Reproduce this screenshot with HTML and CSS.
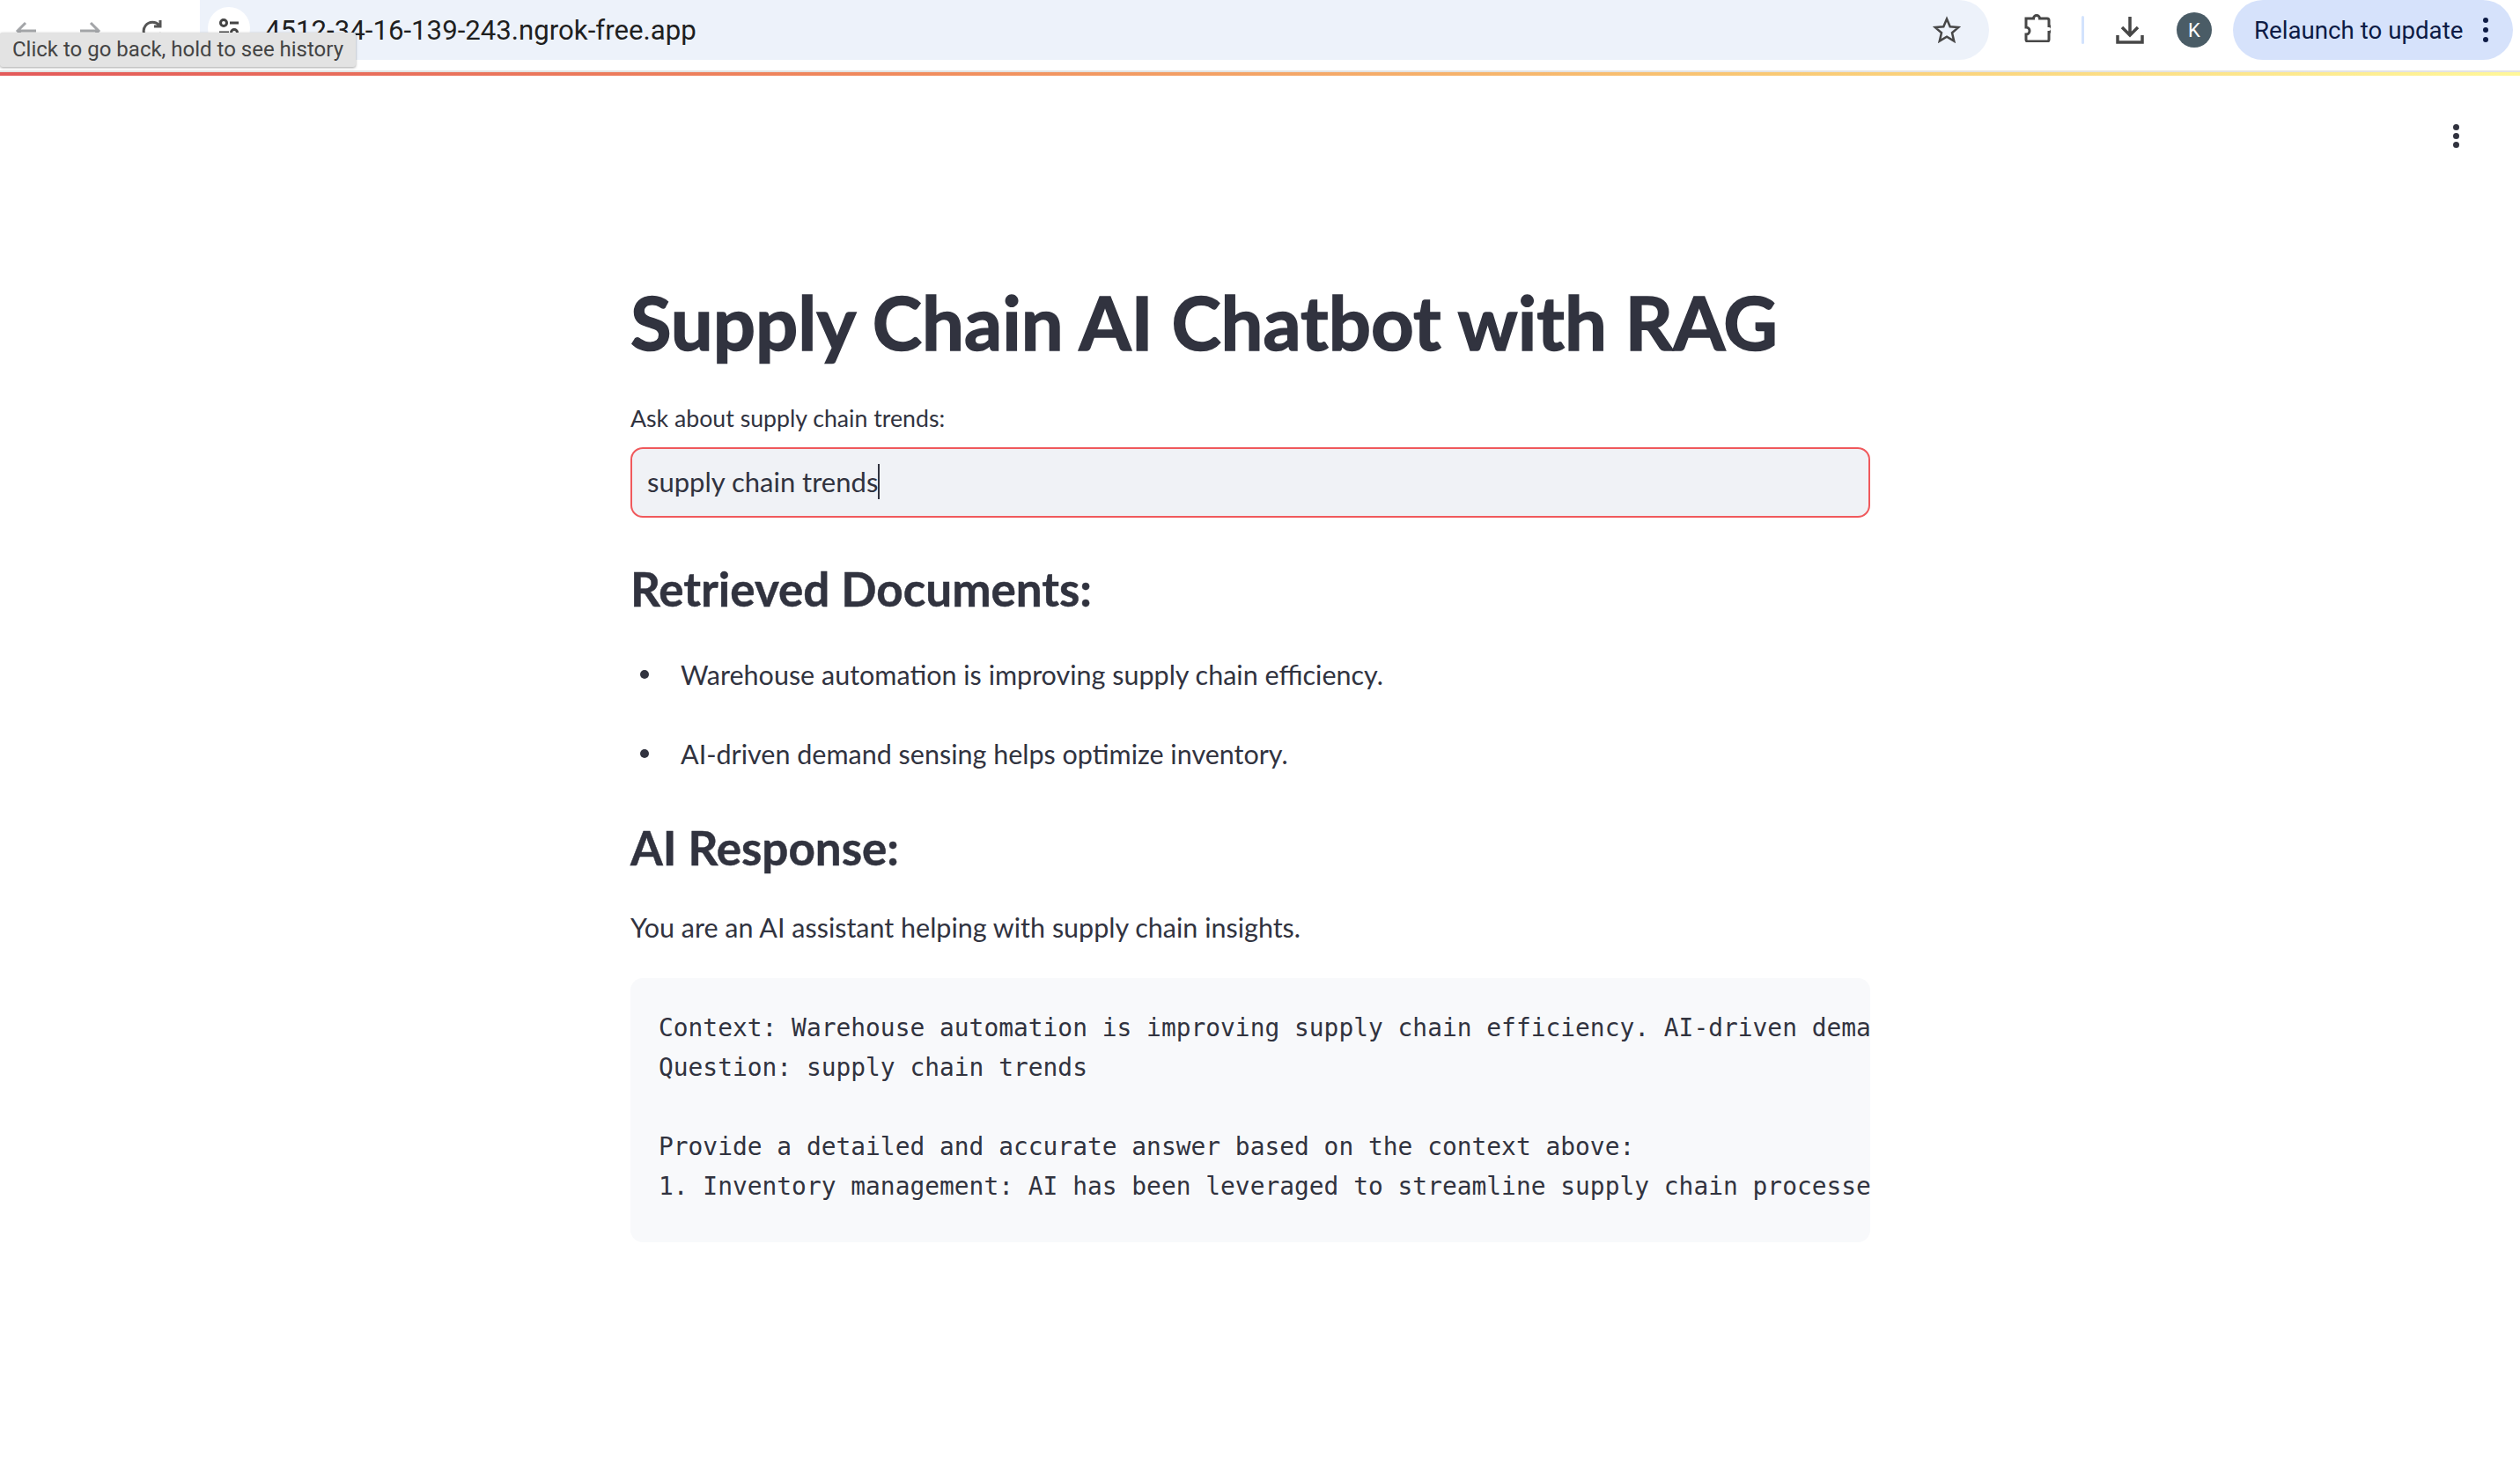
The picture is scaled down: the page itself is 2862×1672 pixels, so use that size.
FILE: index.html
```html
<!DOCTYPE html>
<html lang="en">
<head>
    <meta charset="UTF-8">
    <title>Supply Chain AI Chatbot with RAG</title>
    <link rel="stylesheet" href="styles.css">
</head>
<body>
    <!-- Browser toolbar -->
    <header class="toolbar">
        <div class="nav-buttons">
            <svg class="nav-icon" viewBox="0 0 26 26"><path d="M24 13H3M12 4l-9 9 9 9"/></svg>
            <svg class="nav-icon" viewBox="0 0 26 26"><path d="M2 13h21M14 4l9 9-9 9"/></svg>
            <svg class="nav-icon" viewBox="0 0 26 26"><path d="M22 15a10 10 0 1 1-2-8M21 1v7h-7"/></svg>
        </div>
        <div class="omnibox">
            <span class="site-info">
                <svg viewBox="0 0 24 24"><circle cx="6" cy="6" r="3.5"/><path d="M13 6h10M1 17h11"/><circle cx="18" cy="17" r="3.5"/></svg>
            </span>
            <span class="url">4512-34-16-139-243.ngrok-free.app</span>
            <svg class="star" viewBox="0 0 32 32"><path d="M16 3.500l3.700 8.800 9.500.8-7.200 6.200 2.200 9.300-8.200-5-8.200 5 2.200-9.300-7.200-6.200 9.500-.8z"/></svg>
        </div>
        <svg class="puzzle" viewBox="0 0 32 32"><path d="M4 5h8.500a3.500 3.500 0 0 1 7 0H28a2 2 0 0 1 2 2v6.500a3.500 3.500 0 0 1 0 7V29a2 2 0 0 1-2 2H6a2 2 0 0 1-2-2v-6a4 4 0 0 0 0-8z"/></svg>
        <span class="separator"></span>
        <svg class="download" viewBox="0 0 32 32"><path d="M16 1v20M7 13l9 9 9-9M2 22v8h28v-8"/></svg>
        <span class="avatar">K</span>
        <div class="relaunch">
            <span>Relaunch to update</span>
            <span class="relaunch-dots"><i></i><i></i><i></i></span>
        </div>
    </header>
    <div class="tooltip">Click to go back, hold to see history</div>
    <div class="rainbow"></div>

    <!-- Streamlit page -->
    <div class="menu-row">
        <span class="kebab"><i></i><i></i><i></i></span>
    </div>
    <main class="content">
        <h1>Supply Chain AI Chatbot with RAG</h1>
        <label class="field-label">Ask about supply chain trends:</label>
        <div class="text-input"><span class="typed">supply chain trends</span></div>

        <h3 class="docs-title">Retrieved Documents:</h3>
        <ul class="doc-list">
            <li>Warehouse automation is improving supply chain efficiency.</li>
            <li>AI-driven demand sensing helps optimize inventory.</li>
        </ul>

        <h3 class="response-title">AI Response:</h3>
        <p class="intro">You are an AI assistant helping with supply chain insights.</p>
        <pre class="code-block">Context: Warehouse automation is improving supply chain efficiency. AI-driven dema
Question: supply chain trends

Provide a detailed and accurate answer based on the context above:
1. Inventory management: AI has been leveraged to streamline supply chain processe</pre>
    </main>
</body>
</html>
```

FILE: styles.css
```css
html, body { margin: 0; padding: 0; background: #fff; }
body { height: 1672px; overflow: hidden; font-family: "Lato", "Noto Sans", sans-serif; color: #31333f; position: relative; }

/* Browser toolbar */
.toolbar { display: flex; align-items: flex-start; height: 80px; box-sizing: border-box; padding-right: 8px; font-family: Roboto, "Liberation Sans", sans-serif; }
.nav-buttons { display: flex; gap: 46px; width: 227px; padding: 22px 0 0 17px; box-sizing: border-box; }
.nav-icon { width: 26px; height: 26px; fill: none; stroke-width: 3; }
.nav-icon:nth-child(1), .nav-icon:nth-child(2) { stroke: #a3a5a8; }
.nav-icon:nth-child(3) { stroke: #555; }
.omnibox { display: flex; align-items: center; width: 2032px; height: 68px; background: #edf2fa; border-radius: 0 34px 34px 0; box-sizing: border-box; padding: 0 32px 0 9px; }
.site-info { display: flex; align-items: center; justify-content: center; width: 48px; height: 48px; border-radius: 24px; background: #fff; margin-top: -4px; }
.site-info svg { width: 24px; height: 24px; fill: none; stroke: #444; stroke-width: 3; }
.url { font-size: 31.200px; color: #1f1f1f; margin-left: 17px; flex: 1; }
.star { width: 32px; height: 32px; fill: none; stroke: #474747; stroke-width: 2.500; }
.puzzle { width: 32px; height: 32px; margin: 16px 0 0 38px; fill: none; stroke: #474747; stroke-width: 3; }
.separator { width: 3px; height: 32px; margin: 18px 0 0 35px; background: #d3e3fd; border-radius: 2px; }
.download { width: 32px; height: 32px; margin: 18px 0 0 36px; fill: none; stroke: #474747; stroke-width: 3.5; }
.avatar { display: flex; align-items: center; justify-content: center; width: 40px; height: 40px; margin: 14px 0 0 37px; border-radius: 50%; background: #4a5c66; color: #fff; font-size: 22px; }
.relaunch { display: flex; align-items: center; width: 318px; height: 68px; margin-left: 24px; padding-left: 24px; box-sizing: border-box; background: #d6e2fb; border-radius: 34px; color: #0d1b45; font-size: 27.700px; }
.relaunch-dots { display: flex; flex-direction: column; gap: 5px; margin-left: 23px; }
.relaunch-dots i { width: 6px; height: 6px; border-radius: 50%; background: #0d1b45; }

.tooltip { position: absolute; left: 0; top: 37px; width: 404px; height: 39px; box-sizing: border-box; padding-left: 14px; line-height: 39px; background: #e3e3e3; border-radius: 3px; box-shadow: 0 1px 3px rgba(0,0,0,.35); color: #444; font-size: 24px; font-family: Roboto, "Liberation Sans", sans-serif; }

.rainbow { height: 6px; box-sizing: border-box; border-top: 2px solid #e3e3e3; background: linear-gradient(90deg, #e35a5a 0%, #f08a5d 35%, #f9c874 70%, #fff79a 100%); }

/* Page */
.menu-row { display: flex; justify-content: flex-end; padding: 55px 69px 0 0; }
.kebab { display: flex; flex-direction: column; gap: 3px; }
.kebab i { width: 7px; height: 7px; border-radius: 50%; background: #31333f; }

.content { width: 1408px; margin-left: 716px; }
h1 { font-size: 85px; font-weight: 700; -webkit-text-stroke: 1.500px #31333f; line-height: 100px; margin: 147px 0 0; }
.field-label { display: block; font-size: 26.700px; line-height: 36px; margin-top: 42px; }
.text-input { height: 80px; margin-top: 15px; padding-left: 17px; box-sizing: border-box; display: flex; align-items: center; background: #f0f2f6; border: 2px solid #f0595c; border-radius: 14px; font-size: 31px; }
.typed { border-right: 2px solid #31333f; line-height: 40px; margin-top: -3px; }
h3 { font-size: 53px; font-weight: 700; -webkit-text-stroke: .5px #31333f; line-height: 64px; margin: 0; }
.docs-title { margin-top: 49px; }
.doc-list { list-style: none; margin: 43px 0 0; padding: 0; font-size: 30.500px; line-height: 44px; }
.doc-list li { display: flex; align-items: center; margin-bottom: 46px; }
.doc-list li::before { content: ""; width: 10px; height: 10px; margin: 0 36px 0 11px; border-radius: 50%; background: #31333f; }
.response-title { margin-top: 53px; }
.intro { font-size: 30.500px; line-height: 44px; margin: 36px 0 0; }
.code-block { height: 300px; box-sizing: border-box; margin: 36px 0 0; padding: 34px 0 0 32px; overflow: hidden; background: #f8f9fb; border-radius: 14px; font-family: "DejaVu Sans Mono", "Liberation Mono", monospace; font-size: 27.900px; line-height: 45px; color: #31333f; }
```
